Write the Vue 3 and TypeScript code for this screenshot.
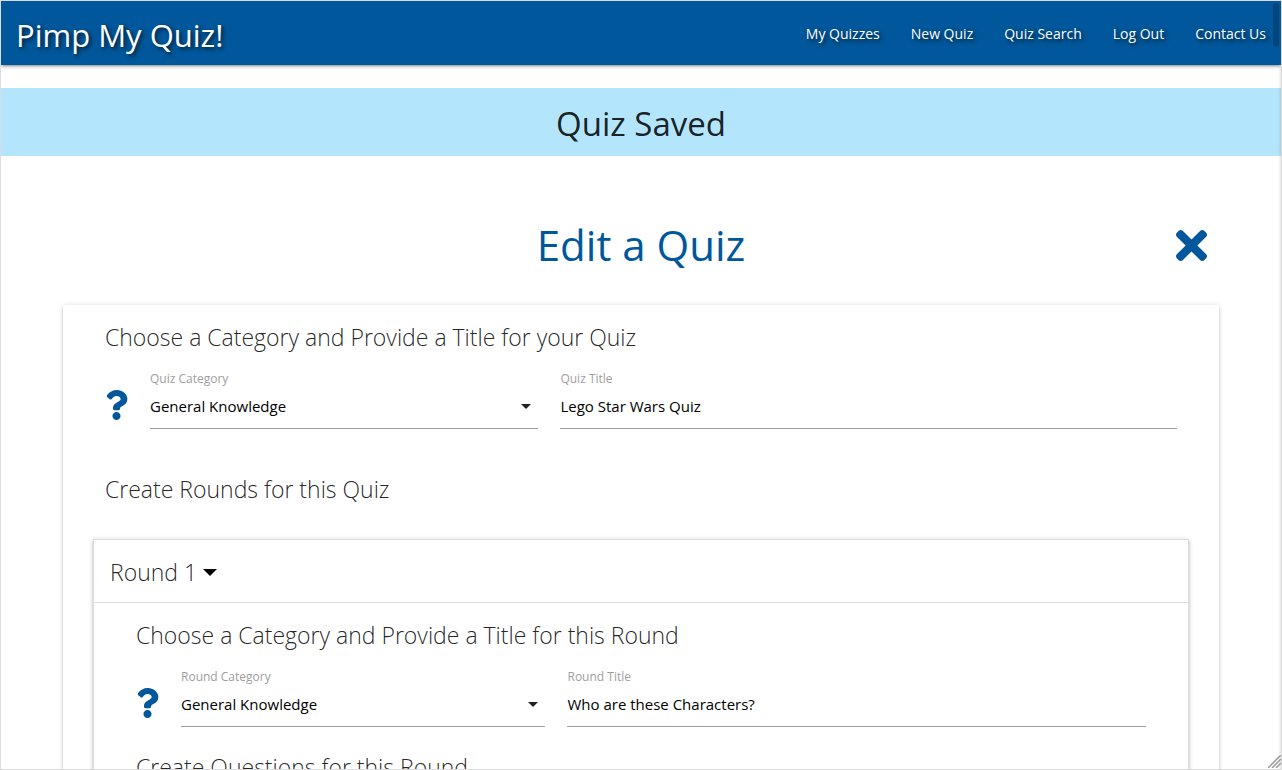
<script setup lang="ts">
import { ref } from 'vue'

const links: string[] = ['My Quizzes', 'New Quiz', 'Quiz Search', 'Log Out', 'Contact Us']
const categories: string[] = ['General Knowledge', 'Film', 'Music', 'Sport']

const quizCategory = ref('General Knowledge')
const quizTitle = ref('Lego Star Wars Quiz')
const roundCategory = ref('General Knowledge')
const roundTitle = ref('Who are these Characters?')
const roundOpen = ref(true)

const questionPath =
  'M202.021 0C122.202 0 70.503 32.703 29.914 91.026c-7.363 10.58-5.093 25.086 5.178 32.874l43.138 32.709c10.373 7.865 25.132 6.026 33.253-4.148 25.049-31.381 43.63-49.449 82.757-49.449 30.764 0 68.816 19.799 68.816 49.631 0 22.552-18.617 34.134-48.993 51.164-35.423 19.86-82.299 44.576-82.299 106.405V320c0 13.255 10.745 24 24 24h72.471c13.255 0 24-10.745 24-24v-5.773c0-42.86 125.268-44.645 125.268-160.627C377.504 66.256 286.902 0 202.021 0zM192 373.459c-38.196 0-69.271 31.075-69.271 69.271 0 38.195 31.075 69.27 69.271 69.27s69.271-31.075 69.271-69.271-31.075-69.27-69.271-69.27z'
</script>

<template>
  <div class="window">
    <header class="nav">
      <a class="brand" href="#">Pimp My Quiz!</a>
      <nav class="links">
        <a v-for="link in links" :key="link" href="#">{{ link }}</a>
      </nav>
    </header>

    <p class="flash" role="status">Quiz Saved</p>

    <main class="container">
      <div class="title-row">
        <h1>Edit a Quiz</h1>
        <button class="close" type="button" aria-label="Close">
          <svg viewBox="0 80 352 352" aria-hidden="true">
            <path d="M242.72 256l100.07-100.07c12.28-12.28 12.28-32.19 0-44.48l-22.24-22.24c-12.28-12.28-32.19-12.28-44.48 0L176 189.28 75.93 89.21c-12.28-12.28-32.19-12.28-44.48 0L9.21 111.45c-12.28 12.28-12.28 32.19 0 44.48L109.28 256 9.21 356.07c-12.28 12.28-12.28 32.19 0 44.48l22.24 22.24c12.28 12.28 32.2 12.28 44.48 0L176 322.72l100.07 100.07c12.28 12.28 32.2 12.28 44.48 0l22.24-22.24c12.28-12.28 12.28-32.19 0-44.48L242.72 256z" />
          </svg>
        </button>
      </div>

      <form class="card" @submit.prevent>
        <section class="group">
          <h2>Choose a Category and Provide a Title for your Quiz</h2>
          <div class="fields">
            <svg class="question" viewBox="0 0 384 512" aria-hidden="true"><path :d="questionPath" /></svg>
            <div class="field">
              <label for="quiz-category">Quiz Category</label>
              <div class="select">
                <select id="quiz-category" v-model="quizCategory">
                  <option v-for="c in categories" :key="c">{{ c }}</option>
                </select>
                <svg class="caret" viewBox="0 0 10 5" aria-hidden="true"><path d="M0 0h10L5 5z" /></svg>
              </div>
            </div>
            <div class="field">
              <label for="quiz-title">Quiz Title</label>
              <input id="quiz-title" v-model="quizTitle" type="text" />
            </div>
          </div>
          <h2 class="rounds-heading">Create Rounds for this Quiz</h2>
        </section>

        <section class="round">
          <button class="round-header" type="button" :aria-expanded="roundOpen" @click="roundOpen = !roundOpen">
            <span>Round 1</span>
            <svg class="round-caret" viewBox="0 0 14 7" aria-hidden="true"><path d="M0 0h14L7 7z" /></svg>
          </button>
          <div v-if="roundOpen" class="group">
            <h2>Choose a Category and Provide a Title for this Round</h2>
            <div class="fields">
              <svg class="question" viewBox="0 0 384 512" aria-hidden="true"><path :d="questionPath" /></svg>
              <div class="field">
                <label for="round-category">Round Category</label>
                <div class="select">
                  <select id="round-category" v-model="roundCategory">
                    <option v-for="c in categories" :key="c">{{ c }}</option>
                  </select>
                  <svg class="caret" viewBox="0 0 10 5" aria-hidden="true"><path d="M0 0h10L5 5z" /></svg>
                </div>
              </div>
              <div class="field">
                <label for="round-title">Round Title</label>
                <input id="round-title" v-model="roundTitle" type="text" />
              </div>
            </div>
            <h2 class="questions-heading">Create Questions for this Round</h2>
          </div>
        </section>
      </form>
    </main>

    <div class="edge"></div>
    <div class="thumb"></div>
    <svg class="grip" viewBox="0 0 13 13" aria-hidden="true">
      <path d="M0 13L13 0M4 13L13 4M8 13L13 8" />
    </svg>
  </div>
</template>

<style>
body {
  margin: 0;
}
</style>

<style scoped>
.window {
  position: relative;
  box-sizing: border-box;
  height: 100vh;
  overflow: hidden;
  border: 1px solid #dcdcdc;
  background: #fff;
  color: rgba(0, 0, 0, 0.87);
  font-family: 'Open Sans', 'Noto Sans', sans-serif;
}

.nav {
  display: flex;
  align-items: center;
  justify-content: space-between;
  height: 64px;
  padding: 0 15px;
  background: #01579b;
  box-shadow: 0 2px 2px rgba(0, 0, 0, 0.14), 0 3px 1px -2px rgba(0, 0, 0, 0.12), 0 1px 5px rgba(0, 0, 0, 0.2);
}

.nav a {
  color: #fff;
  text-decoration: none;
  text-shadow: 2px 2px 4px rgba(0, 0, 0, 0.7);
}

.brand {
  padding-top: 4px;
  font-size: 31px;
  line-height: 40px;
}

.links {
  display: flex;
  gap: 31px;
  padding-top: 2px;
  font-size: 14px;
  line-height: 20px;
}

.flash {
  margin: 23px 0 0;
  padding-top: 4px;
  background: #b3e5fc;
  font-size: 33px;
  line-height: 64px;
  text-align: center;
}

.container {
  padding: 0 62px;
}

.title-row {
  display: grid;
  grid-template-columns: 1fr auto 1fr;
  align-items: center;
  padding: 57px 12px 28px;
}

h1 {
  grid-column: 2;
  margin: 0;
  color: #01579b;
  font-size: 42px;
  font-weight: 400;
  line-height: 64px;
}

.close {
  justify-self: end;
  width: 31px;
  height: 31px;
  padding: 0;
  border: 0;
  background: none;
  cursor: pointer;
}

.close svg {
  display: block;
  fill: #01579b;
}

.card {
  padding: 0 30px;
  border-radius: 2px;
  box-shadow: 0 2px 2px rgba(0, 0, 0, 0.14), 0 3px 1px -2px rgba(0, 0, 0, 0.12), 0 1px 5px rgba(0, 0, 0, 0.2);
}

.group {
  padding: 14px 12px 32px;
}

h2 {
  margin: 0;
  font-size: 23px;
  font-weight: 300;
  line-height: 36px;
}

.fields {
  display: grid;
  grid-template-columns: 23px 63fr 100fr;
  column-gap: 22px;
  margin-top: 17px;
}

.question {
  width: 23px;
  height: 30px;
  margin-top: 18px;
  fill: #01579b;
}

.field {
  min-width: 0;
}

label {
  display: block;
  color: #9e9e9e;
  font-size: 12px;
  line-height: 14px;
}

input,
select {
  display: block;
  box-sizing: border-box;
  width: 100%;
  height: 43px;
  padding: 0 0 2px;
  border: 0;
  border-bottom: 1px solid #9e9e9e;
  border-radius: 0;
  outline: 0;
  appearance: none;
  background: transparent;
  color: #000;
  font-family: inherit;
  font-size: 15px;
}

.select {
  position: relative;
}

.caret {
  position: absolute;
  top: 18px;
  right: 7px;
  width: 10px;
  height: 5px;
  fill: #212121;
  pointer-events: none;
}

.rounds-heading {
  margin-top: 42px;
}

.questions-heading {
  margin-top: 22px;
}

.round {
  border: 1px solid #ddd;
  box-shadow: 0 2px 2px rgba(0, 0, 0, 0.14), 0 3px 1px -2px rgba(0, 0, 0, 0.12), 0 1px 5px rgba(0, 0, 0, 0.2);
}

.round .group {
  padding-right: 42px;
  padding-left: 42px;
}

.round-header {
  display: flex;
  align-items: center;
  gap: 6px;
  box-sizing: border-box;
  width: 100%;
  height: 63px;
  padding: 2px 16px 0;
  border: 0;
  border-bottom: 1px solid #ddd;
  background: none;
  color: rgba(0, 0, 0, 0.87);
  font-family: inherit;
  font-size: 23px;
  font-weight: 300;
  line-height: 36px;
  cursor: pointer;
}

.round-caret {
  width: 14px;
  height: 7px;
  fill: #000;
}

.edge {
  position: absolute;
  top: 65px;
  right: 0;
  bottom: 0;
  width: 3px;
  background: linear-gradient(to right, rgba(0, 0, 0, 0), rgba(0, 0, 0, 0.09));
}

.thumb {
  position: absolute;
  top: 2px;
  right: 2px;
  width: 6px;
  height: 44px;
  border-radius: 3px;
  background: rgba(0, 0, 0, 0.2);
}

.grip {
  position: absolute;
  right: 0;
  bottom: 1px;
  width: 13px;
  height: 13px;
  fill: none;
  stroke: #999;
  stroke-width: 1.5;
}
</style>
